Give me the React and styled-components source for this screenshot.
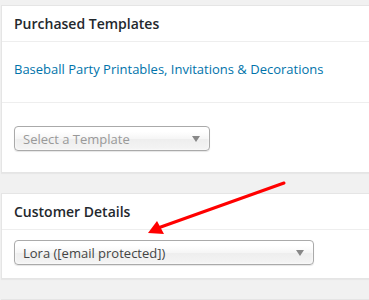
import React from 'react'
import styled, {createGlobalStyle} from 'styled-components'

const Global = createGlobalStyle`
  html, body {
    margin: 0;
    padding: 0;
    background: #f1f1f1;
    font-family: "Open Sans", "Liberation Sans", sans-serif;
    overflow: hidden;
  }
`

const Page = styled.div`
  position: relative;
  box-sizing: border-box;
  padding: 5px 0 0 1px;
  display: flex;
  flex-direction: column;
  gap: 20px;
  width: 100%;
  height: 300px;
  overflow: hidden;
`

const Card = styled.div`
  flex: none;
  background: #fff;
  border: 1px solid #e5e5e5;
  border-right: none;
  box-shadow: 0 1px 1px rgba(0, 0, 0, 0.04);
`

const CardHeader = styled.h3`
  margin: 0;
  height: 35px;
  line-height: 35px;
  padding: 0 12px;
  font-size: 14px;
  font-weight: 600;
  color: #23282d;
  border-bottom: 1px solid #eee;
`

const Section = styled.div`
  padding: ${p => p.pad || '0 12px'};
  height: ${p => p.h}px;
  box-sizing: border-box;
  border-bottom: ${p => (p.last ? 'none' : '1px solid #eee')};
`

const Link = styled.a`
  display: block;
  font-size: 13px;
  color: #0073aa;
  text-decoration: none;
  line-height: 18px;
  padding-top: 18px;
  white-space: nowrap;
`

const Select = styled.div`
  display: flex;
  align-items: center;
  justify-content: space-between;
  box-sizing: border-box;
  width: ${p => p.w}px;
  height: 25px;
  padding: 0 9px 0 8px;
  border: 1px solid #aaa;
  border-radius: 4px;
  background: linear-gradient(#fff 20%, #f6f6f6 50%, #eee 52%, #f4f4f4);
  box-shadow: 0 0 3px #fff inset, 0 1px 1px rgba(0, 0, 0, 0.1);
  font-size: 13px;
  color: ${p => (p.placeholder ? '#999' : '#444')};
`

const Caret = styled.span`
  width: 0;
  height: 0;
  border-left: 4px solid transparent;
  border-right: 4px solid transparent;
  border-top: 6px solid #888;
`

const Arrow = styled.svg`
  position: absolute;
  left: 0;
  top: 0;
  pointer-events: none;
`

export default function App() {
  return (
    <>
      <Global />
      <Page>
        <Card>
          <CardHeader>Purchased Templates</CardHeader>
          <Section h={61}>
            <Link href="#">Baseball Party Printables, Invitations &amp; Decorations</Link>
          </Section>
          <Section h={69} pad="23px 12px 0" last>
            <Select w={196} placeholder>
              <span>Select a Template</span>
              <Caret />
            </Select>
          </Section>
        </Card>
        <Card>
          <CardHeader>Customer Details</CardHeader>
          <Section h={48} pad="10px 12px 0" last>
            <Select w={300}>
              <span>Lora ([email protected])</span>
              <Caret />
            </Select>
          </Section>
        </Card>
        <Card>
          <Section h={40} last />
        </Card>
        <Arrow width="369" height="300" viewBox="0 0 369 300">
          <line x1="284" y1="183" x2="158" y2="228" stroke="#f00" strokeWidth="3" strokeLinecap="round" />
          <polygon points="148,233 157,221 164,234" fill="#f00" />
        </Arrow>
      </Page>
    </>
  )
}
